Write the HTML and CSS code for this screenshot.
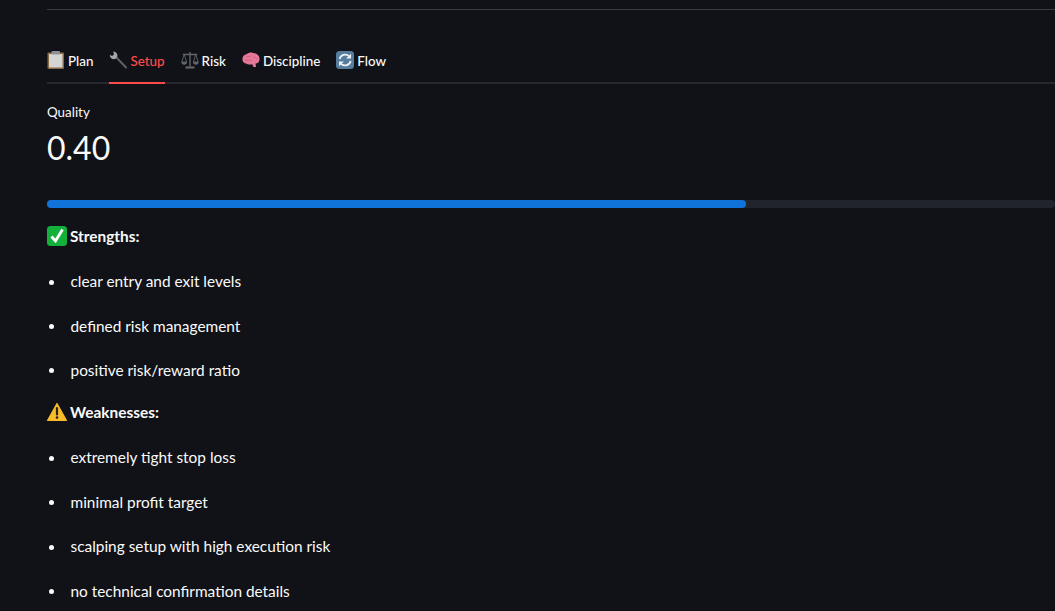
FILE: index.html
```html
<!DOCTYPE html>
<html lang="en">
<head>
    <meta charset="UTF-8">
    <meta name="viewport" content="width=device-width, initial-scale=1.0">
    <title>Setup</title>
    <link rel="stylesheet" href="styles.css">
</head>
<body>

<div class="main">
    <hr class="divider">

    <!-- Tabs -->
    <div class="tabs">
        <div class="tab">
            <svg class="tab-icon" viewBox="0 0 18 18">
                <rect x="0.5" y="1.5" width="16.5" height="16.5" rx="1" fill="#8a6a45"/>
                <rect x="2" y="3" width="13.5" height="13.5" fill="#d5d5d3"/>
                <rect x="4.5" y="0" width="8.5" height="3.5" rx="1" fill="#8d9196"/>
            </svg>
            <span>Plan</span>
        </div>
        <div class="tab active">
            <svg class="tab-icon" viewBox="0 0 18 18">
                <path d="M6 5 L17 16.5" stroke="#5c6167" stroke-width="2" stroke-linecap="round"/>
                <path d="M0.8 3.8 A4 4 0 0 0 6.6 7.8 L8.2 6 A4 4 0 0 0 4.2 0.6 L5 3.6 L3 5 Z" fill="#a3a7ac"/>
            </svg>
            <span>Setup</span>
        </div>
        <div class="tab">
            <svg class="tab-icon" viewBox="0 0 18 18" fill="none" stroke="#5f656b">
                <path d="M9 1 V15.5 M1.8 3.5 H16.2" stroke-width="1.4"/>
                <path d="M4.5 16.5 H13.5" stroke-width="2.2"/>
                <path d="M3.2 3.5 L0.8 11 H5.6 Z M14.8 3.5 L12.4 11 H17.2 Z" stroke-width="0.9"/>
                <path d="M0.4 11 A2.8 2.8 0 0 0 6 11 Z M12 11 A2.8 2.8 0 0 0 17.6 11 Z" fill="#5f656b" stroke="none"/>
            </svg>
            <span>Risk</span>
        </div>
        <div class="tab">
            <svg class="tab-icon" viewBox="0 0 18 18">
                <path d="M0.5 9 C0 6 2 3.5 4.5 3.2 C6.5 1.2 10 1 12 2.2 C15 2.2 17.8 5 17.5 8.2 C17.6 11 15.5 12.5 13.5 12.4 L14 16 L11.5 16 L10.2 13.2 C8 14 5.5 13.5 4.2 12.6 C2.5 12.6 0.8 11 0.5 9 Z" fill="#e8789a"/>
                <path d="M4 6 C5.5 4.5 7.5 6.5 9.5 4.8 M3 9.5 C5.5 8 7.5 10.5 10 9 M11.5 6.5 C13 5.5 14.5 6.5 15 8.5" stroke="#c4587a" stroke-width="0.7" fill="none"/>
            </svg>
            <span>Discipline</span>
        </div>
        <div class="tab">
            <svg class="tab-icon" viewBox="0 0 18 18">
                <rect x="0" y="0" width="18" height="18" rx="3.5" fill="#567d9e"/>
                <path d="M3.6 8 A5.6 5.6 0 0 1 13 5.2" stroke="#eef2f5" stroke-width="1.8" fill="none"/>
                <path d="M14.6 10 A5.6 5.6 0 0 1 5.2 12.8" stroke="#eef2f5" stroke-width="1.8" fill="none"/>
                <path d="M15 2.8 V7.6 H10.2 Z M3 15.2 V10.4 H7.8 Z" fill="#eef2f5"/>
            </svg>
            <span>Flow</span>
        </div>
    </div>

    <!-- Metric -->
    <div class="metric">
        <div class="metric-label">Quality</div>
        <div class="metric-value">0.40</div>
    </div>

    <div class="progress"><div class="progress-fill"></div></div>

    <!-- Strengths -->
    <p class="heading">
        <svg class="heading-icon" viewBox="0 0 20 20">
            <rect x="0" y="0" width="20" height="20" rx="3.5" fill="#13b13c"/>
            <path d="M4.5 10.5 L8.5 15 L15.5 3.5" stroke="#fff" stroke-width="2.8" fill="none"/>
        </svg>
        <strong>Strengths:</strong>
    </p>
    <ul class="points">
        <li>clear entry and exit levels</li>
        <li>defined risk management</li>
        <li>positive risk/reward ratio</li>
    </ul>

    <!-- Weaknesses -->
    <p class="heading">
        <svg class="heading-icon" viewBox="0 0 20 20">
            <path d="M10 1.5 L19.5 18.5 H0.5 Z" fill="#f8bb2a" stroke="#f8bb2a" stroke-width="1.2" stroke-linejoin="round"/>
            <path d="M10 6 V12.5" stroke="#2a2420" stroke-width="2.2" stroke-linecap="round"/>
            <circle cx="10" cy="15.6" r="1.3" fill="#2a2420"/>
        </svg>
        <strong>Weaknesses:</strong>
    </p>
    <ul class="points">
        <li>extremely tight stop loss</li>
        <li>minimal profit target</li>
        <li>scalping setup with high execution risk</li>
        <li>no technical confirmation details</li>
    </ul>
</div>

</body>
</html>
```

FILE: styles.css
```css
/* General Styles */
body {
    margin: 0;
    overflow: hidden;
    background-color: #101217;
    color: #fafafa;
    font-family: "Lato", "Noto Sans", sans-serif;
    font-size: 15.4px;
}

.main {
    padding: 9px 0 0 47px;
}

.divider {
    border: none;
    height: 1px;
    margin: 0 0 30px;
    background-color: #3b3d44;
}

/* Tabs */
.tabs {
    display: flex;
    gap: 16px;
    height: 42px;
    border-bottom: 2px solid #26282e;
}

.tab {
    display: flex;
    align-items: center;
    gap: 3px;
    height: 44px;
    box-sizing: border-box;
    padding-bottom: 2px;
    font-size: 13.4px;
    font-weight: 500;
}

.tab.active {
    color: #ff4b4b;
    border-bottom: 2px solid #ff4b4b;
    padding-bottom: 0;
}

.tab-icon {
    width: 18px;
    height: 18px;
    margin-bottom: 2px;
}

/* Metric */
.metric {
    margin-top: 19px;
}

.metric-label {
    font-size: 13.4px;
    line-height: 18px;
}

.metric-value {
    font-size: 32px;
    line-height: 50px;
    margin-top: 2px;
}

/* Progress */
.progress {
    height: 8px;
    margin: 27px 0 14px;
    border-radius: 4px;
    background-color: #22242c;
}

.progress-fill {
    width: 699px;
    height: 8px;
    border-radius: 4px;
    background-color: #0f73d9;
}

/* Text blocks */
.heading {
    display: flex;
    align-items: center;
    gap: 3px;
    margin: 6px 0 9px;
    height: 28px;
}

.progress + .heading {
    margin-top: 0;
}

.heading-icon {
    width: 20px;
    height: 20px;
}

.points {
    margin: 0;
    padding: 0;
    list-style: none;
}

.points li {
    display: flex;
    align-items: center;
    height: 44.4px;
}

.points li::before {
    content: "";
    width: 5px;
    height: 5px;
    margin: 2px 17px 0 1.5px;
    border-radius: 50%;
    background-color: #fafafa;
}
```
